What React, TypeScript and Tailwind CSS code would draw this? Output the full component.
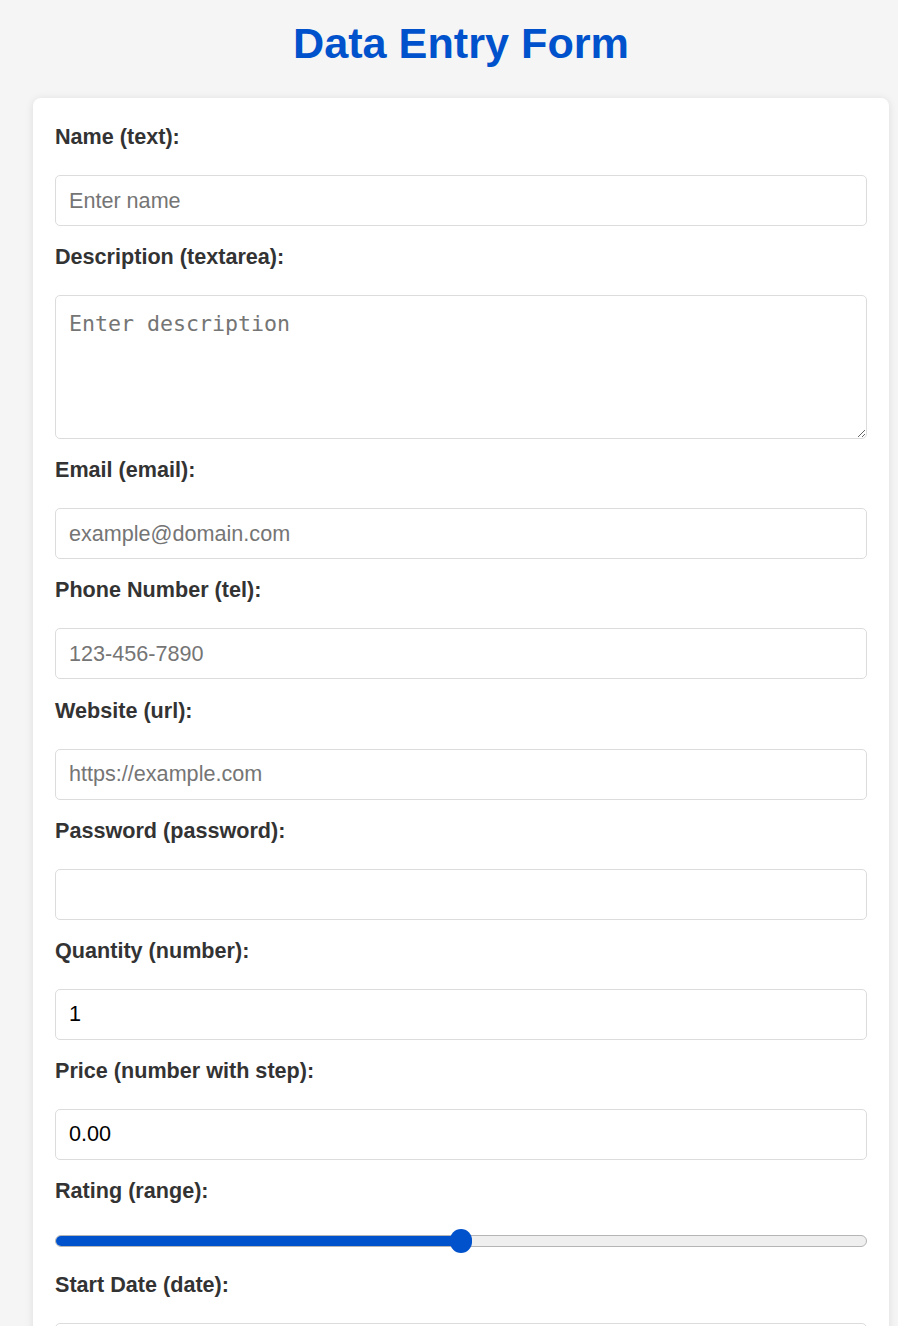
import React from 'react';

const labelCls = 'block h-[25px] leading-[25px] mb-[26px] text-[21.6px] font-bold text-[#333]';
const inputCls =
  'block w-full h-[51px] mb-[18.15px] px-[13px] rounded-[5px] border border-[#dcdcdc] bg-white text-[21.6px] text-black placeholder:text-[#757575] outline-none [appearance:textfield] [&::-webkit-inner-spin-button]:appearance-none [&::-webkit-outer-spin-button]:appearance-none';

type Field = { label: string; type: string; placeholder?: string; value?: string };

const topFields: Field[] = [
  { label: 'Email (email):', type: 'email', placeholder: 'example@domain.com' },
  { label: 'Phone Number (tel):', type: 'tel', placeholder: '123-456-7890' },
  { label: 'Website (url):', type: 'url', placeholder: 'https://example.com' },
  { label: 'Password (password):', type: 'password' },
  { label: 'Quantity (number):', type: 'number', value: '1' },
  { label: 'Price (number with step):', type: 'number', value: '0.00' },
];

/**
 * Simple data entry form card with a mix of input types.
 */
export default function App() {
  return (
    <div className="min-h-screen bg-[#f5f5f5] font-['Liberation_Sans',Arial,sans-serif] overflow-hidden">
      <div className="ml-[33px] w-[856px]">
        {/* Title */}
        <h1 className="pt-[18px] h-[98px] text-center text-[43.2px] leading-[50px] font-bold text-[#0052cc]">
          Data Entry Form
        </h1>

        {/* Form card */}
        <div className="bg-white rounded-[8px] shadow-[0_1px_8px_rgba(0,0,0,0.1)] px-[22px] pt-[26px] pb-[40px]">
          <label className={labelCls}>Name (text):</label>
          <input type="text" placeholder="Enter name" className={inputCls} />

          <label className={labelCls}>Description (textarea):</label>
          <textarea
            placeholder="Enter description"
            className="block w-full h-[144px] mb-[18.15px] px-[13px] pt-[14px] pb-[10px] rounded-[5px] border border-[#dcdcdc] bg-white text-[21.6px] leading-[27px] font-['DejaVu_Sans_Mono',monospace] placeholder:text-[#757575] outline-none resize-y"
          />

          {topFields.map((f) => (
            <div key={f.label}>
              <label className={labelCls}>{f.label}</label>
              <input type={f.type} placeholder={f.placeholder} defaultValue={f.value} className={inputCls} />
            </div>
          ))}

          {/* Rating slider */}
          <label className={labelCls}>Rating (range):</label>
          <div className="relative h-[24px] mb-[19px] flex items-center">
            <div className="w-full h-[12px] rounded-full border border-[#b5b5b5] bg-[#efefef] overflow-hidden">
              <div className="h-full w-1/2 bg-[#0052cc]" />
            </div>
            <div className="absolute left-1/2 top-0 -ml-[11px] w-[22px] h-[24px] rounded-full bg-[#0052cc]" />
          </div>

          <label className={labelCls}>Start Date (date):</label>
          <input type="date" className={inputCls} />
        </div>
      </div>
    </div>
  );
}
